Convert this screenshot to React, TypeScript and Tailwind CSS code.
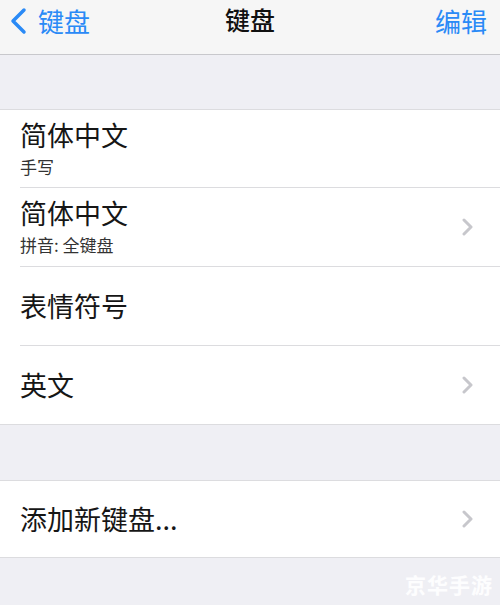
import React from "react";

const FONT = { fontFamily: '"Noto Sans CJK SC", "Noto Sans", sans-serif' };

type Row = { title: string; sub?: string; chevron?: boolean };

const ROWS: Row[] = [
  { title: "简体中文", sub: "手写" },
  { title: "简体中文", sub: "拼音: 全键盘", chevron: true },
  { title: "表情符号" },
  { title: "英文", chevron: true },
];

function Chevron() {
  return (
    <svg width="12" height="20" viewBox="0 0 12 20" className="shrink-0">
      <polyline points="2,3 9,10 2,17" fill="none" stroke="#c7c7cc" strokeWidth="3" strokeLinecap="round" strokeLinejoin="round" />
    </svg>
  );
}

function Cell({ row, first, last }: { row: Row; first: boolean; last: boolean }) {
  return (
    <div className="pl-5">
      <div
        className={`flex items-center pr-[26px] ${first || last ? "h-[78px]" : "h-[79px]"} ${
          last ? "" : "border-b border-[#dcdcdf]"
        }`}
      >
        <div className="flex-1 flex flex-col justify-center">
          <div className="text-[27px] leading-[28px] text-[#161616]">{row.title}</div>
          {row.sub ? <div className="mt-[8px] text-[17px] leading-[20px] text-[#333]">{row.sub}</div> : null}
        </div>
        {row.chevron ? <Chevron /> : null}
      </div>
    </div>
  );
}

export default function App() {
  return (
    <div className="relative w-[500px] h-[605px] overflow-hidden bg-[#efeff4]" style={FONT}>
      {/* Nav bar */}
      <div className="h-[55px] bg-[#f6f6f6] border-b border-[#c8c8cc] flex items-center px-2 relative">
        <div className="flex items-center gap-[10px] text-[#2a8af6] pb-[13px]">
          <svg width="20" height="28" viewBox="0 0 20 28">
            <polyline points="16,3 5,14 16,25" fill="none" stroke="#2a8af6" strokeWidth="3.5" strokeLinecap="round" strokeLinejoin="round" />
          </svg>
          <span className="text-[26px] leading-[30px]">键盘</span>
        </div>
        <div className="absolute left-1/2 -translate-x-1/2 top-[4px] text-[25px] leading-[30px] text-[#111] font-medium">键盘</div>
        <span className="ml-auto pr-[5px] pb-[13px] text-[26px] leading-[30px] text-[#2a8af6]">编辑</span>
      </div>

      <div className="h-[54px]" />

      <div className="bg-white border-y border-[#dcdcdf]">
        {ROWS.map((r, i) => (
          <Cell key={i} row={r} first={i === 0} last={i === ROWS.length - 1} />
        ))}
      </div>

      <div className="h-[55px]" />

      <div className="bg-white border-y border-[#dcdcdf]">
        <div className="pl-5">
          <div className="h-[76px] flex items-center pr-[26px]">
            <div className="flex-1 text-[27px] leading-[28px] text-[#161616]">添加新键盘...</div>
            <Chevron />
          </div>
        </div>
      </div>

      <div className="absolute right-[7px] bottom-[5px] text-[21px] font-bold text-white/90 tracking-[1px]">京华手游</div>
    </div>
  );
}
